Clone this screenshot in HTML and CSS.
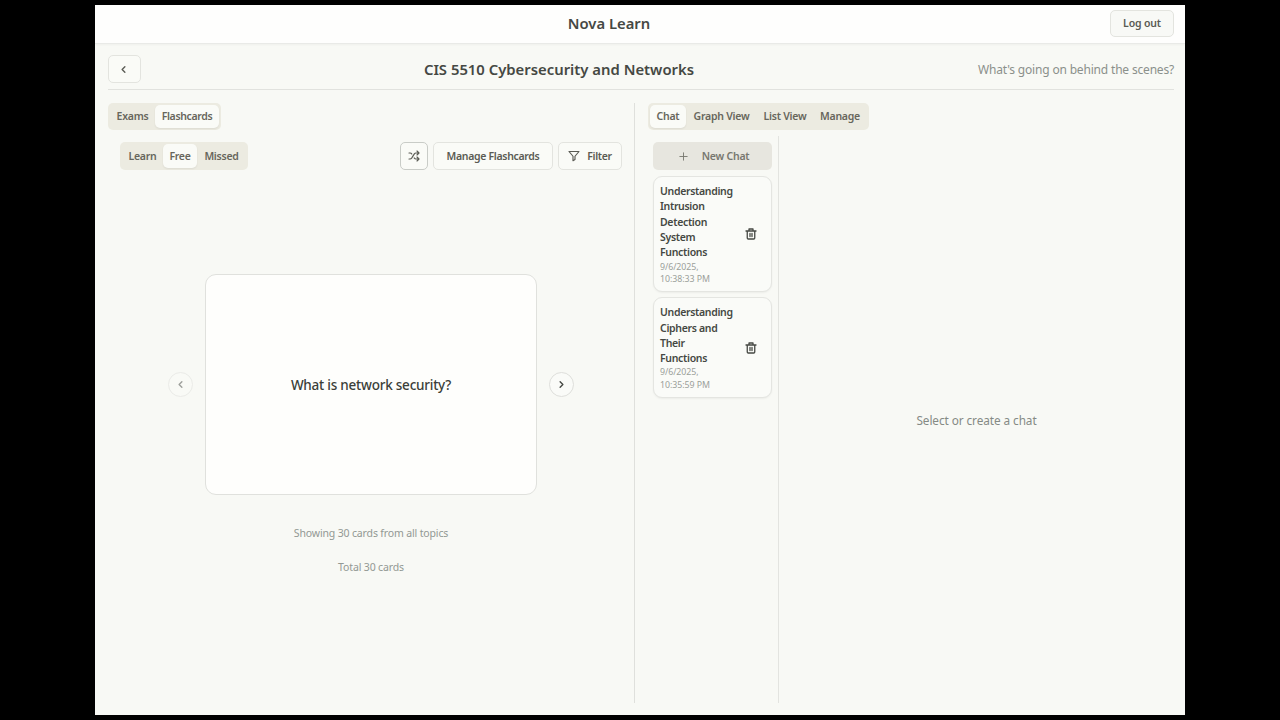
FILE: index.html
```html
<!DOCTYPE html>
<html lang="en">
<head>
<meta charset="utf-8">
<title>Nova Learn</title>
<link rel="stylesheet" href="styles.css">
</head>
<body>
<div class="app">
  <header class="topbar">
    <div class="brand">Nova Learn</div>
    <button class="btn logout">Log out</button>
  </header>
  <main class="page">
    <div class="course-bar">
      <button class="btn back" aria-label="Back"><svg class="chev" viewBox="0 0 24 24"><path d="m15 18-6-6 6-6"/></svg></button>
      <h1 class="course-title">CIS 5510 Cybersecurity and Networks</h1>
      <span class="hint">What's going on behind the scenes?</span>
    </div>
    <div class="columns">
      <section class="study">
        <nav class="tabs main-tabs"><span class="tab w-exams">Exams</span><span class="tab active w-flash">Flashcards</span></nav>
        <div class="toolbar">
          <nav class="tabs"><span class="tab w-learn">Learn</span><span class="tab active w-free">Free</span><span class="tab w-missed">Missed</span></nav>
          <div class="actions">
            <button class="btn shuffle" aria-label="Shuffle"><svg class="ico" viewBox="0 0 24 24"><path d="m18 14 4 4-4 4M18 2l4 4-4 4M2 18h2a4 4 0 0 0 3.300-1.700l5.400-8.600A4 4 0 0 1 16 6h6M2 6h2a4 4 0 0 1 3.600 2.200M22 18h-6a4 4 0 0 1-3.300-1.800l-.4-.5"/></svg></button>
            <button class="btn manage">Manage Flashcards</button>
            <button class="btn filter"><svg class="ico" viewBox="0 0 24 24"><path d="M2 3h20l-8 9.500V19l-4 2.500v-9z"/></svg><span>Filter</span></button>
          </div>
        </div>
        <div class="deck">
          <button class="round disabled" aria-label="Previous"><svg class="chev" viewBox="0 0 24 24"><path d="m15 18-6-6 6-6"/></svg></button>
          <div class="flashcard"><span>What is network security?</span></div>
          <button class="round" aria-label="Next"><svg class="chev" viewBox="0 0 24 24"><path d="m9 18 6-6-6-6"/></svg></button>
        </div>
        <p class="note first">Showing 30 cards from all topics</p>
        <p class="note">Total 30 cards</p>
      </section>
      <section class="assist">
        <nav class="tabs"><span class="tab active w-chat">Chat</span><span class="tab w-graph">Graph View</span><span class="tab w-list">List View</span><span class="tab w-manage">Manage</span></nav>
        <div class="chat-area">
          <aside class="chats">
            <button class="new-chat"><svg class="plus" viewBox="0 0 24 24"><path d="M4 12h16M12 4v16"/></svg><span>New Chat</span></button>
            <article class="chat c1">
              <div class="info"><h2>Understanding<br>Intrusion<br>Detection<br>System<br>Functions</h2><time>9/6/2025,<br>10:38:33 PM</time></div>
              <svg class="trash" viewBox="0 0 24 24"><path d="M2 6h20M8 6V2h8v4M4.500 6v14a2 2 0 0 0 2 2h11a2 2 0 0 0 2-2V6M10 11v6M14 11v6"/></svg>
            </article>
            <article class="chat c2">
              <div class="info"><h2>Understanding<br>Ciphers and<br>Their<br>Functions</h2><time>9/6/2025,<br>10:35:59 PM</time></div>
              <svg class="trash" viewBox="0 0 24 24"><path d="M2 6h20M8 6V2h8v4M4.500 6v14a2 2 0 0 0 2 2h11a2 2 0 0 0 2-2V6M10 11v6M14 11v6"/></svg>
            </article>
          </aside>
          <div class="empty">Select or create a chat</div>
        </div>
      </section>
    </div>
  </main>
</div>
</body>
</html>
```
FILE: styles.css
```css
* { box-sizing: border-box; }
body {
  margin: 0;
  width: 1280px;
  height: 720px;
  padding: 5px 95px;
  overflow: hidden;
  background: #000;
  color: #454843;
  font-family: "Noto Sans", "Open Sans", sans-serif;
  font-size: 10.5px;
}
button { font: inherit; color: inherit; padding: 0; margin: 0; letter-spacing: inherit; }
h1, h2, p { margin: 0; }
svg { fill: none; stroke: currentColor; stroke-width: 2; stroke-linecap: round; stroke-linejoin: round; flex: none; }
.app { width: 1090px; height: 710px; background: #f8f9f5; display: flex; flex-direction: column; }
.topbar {
  height: 39px;
  display: grid;
  grid-template-columns: 1fr 64px;
  align-items: center;
  padding: 0 11px 2px 13px;
  background: #fefefd;
  border-bottom: 1px solid #e9eae7;
  box-shadow: 0 1px 2px #0000000a;
}
.brand { text-align: center; font-size: 14.8px; font-weight: 600; white-space: nowrap; }
.btn {
  display: flex;
  align-items: center;
  justify-content: center;
  height: 28px;
  border: 1px solid #e3e4df;
  border-radius: 5px;
  background: #fafbf7;
  color: #5a5b54;
  font-weight: 600;
  letter-spacing: -.32px;
  white-space: nowrap;
}
.logout { height: 27px; background: #f8f9f6; letter-spacing: -.15px; }
.page { flex: 1; padding: 0 11px 0 13px; display: flex; flex-direction: column; }
.course-bar {
  height: 46px;
  display: grid;
  grid-template-columns: 32px 1fr 196px;
  align-items: center;
  padding-top: 5px;
  border-bottom: 1px solid #e1e2de;
}
.back { width: 33px; padding-right: 2px; }
.chev { width: 11px; height: 11px; stroke-width: 3; }
.course-title { text-align: center; font-size: 14.85px; font-weight: 600; white-space: nowrap; }
.hint { text-align: right; font-size: 12px; letter-spacing: -.18px; color: #8b908b; white-space: nowrap; }
.columns { flex: 1; display: flex; padding: 13px 0 12px; }
.study { width: 527px; border-right: 1px solid #dfe0dc; }
.tabs {
  display: inline-flex;
  height: 27px;
  padding: 2px;
  border-radius: 5px;
  background: #ecebe1;
  font-weight: 600;
  letter-spacing: -.26px;
  color: #67665c;
  vertical-align: top;
}
.tab { display: flex; align-items: center; justify-content: center; border-radius: 5px; white-space: nowrap; }
.main-tabs .tab, .assist .tab { padding-bottom: 1px; }
.active { background: #fafbf7; box-shadow: 0 1px 2px #00000012; }
.w-exams { width: 45px; }
.w-flash { width: 64px; letter-spacing: -.36px; }
.w-learn { width: 41px; }
.w-free { width: 34px; }
.w-missed { width: 49px; }
.w-chat { width: 36px; }
.w-graph { width: 71px; }
.w-list { width: 56px; }
.w-manage { width: 54px; }
.toolbar { display: flex; justify-content: space-between; margin: 12px 12px 0; height: 28px; }
.toolbar .tabs { height: 28px; }
.actions { display: flex; gap: 5px; }
.ico { width: 12px; height: 12px; stroke-width: 2.3; }
.shuffle { width: 28px; border-color: #c9ccc7; }
.manage { width: 120px; }
.filter { width: 64px; gap: 7px; }
.deck { display: flex; align-items: center; justify-content: center; gap: 12px; margin-top: 104px; }
.flashcard {
  width: 332px;
  height: 221px;
  display: flex;
  align-items: center;
  justify-content: center;
  background: #fefefc;
  border: 1px solid #e0e1dd;
  border-radius: 11px;
  font-size: 13.5px;
  font-weight: 500;
  letter-spacing: -.23px;
  color: #3b3e39;
}
.round {
  width: 25px;
  height: 25px;
  display: flex;
  align-items: center;
  justify-content: center;
  border: 1px solid #dedfdb;
  border-radius: 50%;
  background: #fafbf8;
}
.disabled { opacity: .5; }
.note { text-align: center; color: #929893; font-size: 10.5px; line-height: 16px; letter-spacing: -.15px; margin-top: 18px; }
.first { margin-top: 30px; }
.assist { flex: 1; padding-left: 13px; display: flex; flex-direction: column; align-items: flex-start; }
.chat-area { flex: 1; align-self: stretch; display: flex; padding-top: 6px; }
.chats { width: 131px; padding: 6px 6px 0 5px; border-right: 1px solid #e3e4e0; }
.new-chat {
  width: 119px;
  height: 28px;
  display: flex;
  align-items: center;
  justify-content: center;
  gap: 13px;
  padding-left: 2px;
  border: 0;
  border-radius: 5px;
  background: #e7e6df;
  color: #77776f;
  font-weight: 600;
  letter-spacing: -.22px;
}
.plus { width: 11px; height: 11px; }
.chat {
  width: 119px;
  display: flex;
  align-items: center;
  justify-content: space-between;
  padding: 0 14px 0 6px;
  border: 1px solid #e4e5e1;
  border-radius: 9px;
  background: #fafbf8;
  box-shadow: 0 1px 2px #0000000d;
}
.info { padding-top: 1px; }
.c1 { height: 116px; margin-top: 6px; }
.c2 { height: 101px; margin-top: 5px; }
.chat h2 { font-size: 10.5px; line-height: 15.3px; font-weight: 600; letter-spacing: -.32px; white-space: nowrap; }
.chat time { display: block; font-size: 8.8px; line-height: 12.2px; letter-spacing: -.06px; color: #9a9f9a; white-space: nowrap; }
.trash { width: 12px; height: 12px; stroke-width: 2.6; }
.empty { flex: 1; display: flex; align-items: center; justify-content: center; color: #858a85; font-size: 11.8px; letter-spacing: -.08px; }
```
